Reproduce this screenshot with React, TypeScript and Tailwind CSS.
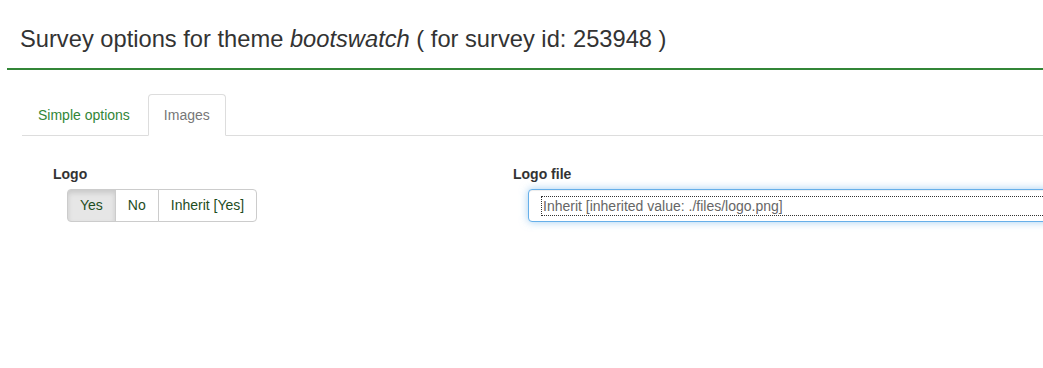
export default function App() {
  return (
    <div className="min-h-[368px] w-[1043px] overflow-hidden bg-white text-[14px] text-[#333] font-['Liberation_Sans',Arial,sans-serif]">
      <div className="pl-[7px]">
        <div className="border-b-2 border-[#328637] pl-[13px] pt-[26px] pb-[16px] w-[1100px]">
          <h1 className="text-[23.7px] leading-[26px] text-[#333]">
            Survey options for theme <em>bootswatch</em> ( for survey id: 253948 )
          </h1>
        </div>
      </div>

      <div className="pl-[22px] pt-[24px]">
        <ul className="flex border-b border-[#ddd] w-[1100px]">
          <li className="mr-[2px] -mb-px">
            <a className="block px-[15px] py-[10px] leading-[20px] text-[#328637] border border-transparent rounded-t-[4px]">
              Simple options
            </a>
          </li>
          <li className="-mb-px">
            <a className="block px-[15px] py-[10px] leading-[20px] text-[#777] bg-white border border-[#ddd] border-b-transparent rounded-t-[4px]">
              Images
            </a>
          </li>
        </ul>
      </div>

      <div className="flex pl-[38px] pt-[28px]">
        <div className="w-[460px] shrink-0 px-[15px]">
          <label className="block font-bold leading-[20px] mb-[5px]">Logo</label>
          <div className="ml-[14px] inline-flex h-[33px]">
            <button className="px-[12px] text-[#1e4d1e] bg-[#e6e6e6] border border-[#ccc] rounded-l-[4px] shadow-[inset_0_3px_5px_rgba(0,0,0,0.125)]">
              Yes
            </button>
            <button className="px-[12px] -ml-px text-[#1e4d1e] bg-white border border-[#ccc]">
              No
            </button>
            <button className="px-[12px] -ml-px text-[#1e4d1e] bg-white border border-[#ccc] rounded-r-[4px]">
              Inherit [Yes]
            </button>
          </div>
        </div>
        <div className="shrink-0 px-[15px]">
          <label className="block font-bold leading-[20px] mb-[5px]">Logo file</label>
          <div className="ml-[15px] h-[33px] w-[700px] rounded-[4px] border border-[#66afe9] bg-white shadow-[inset_0_1px_1px_rgba(0,0,0,0.075),0_0_8px_rgba(102,175,233,0.6)] flex items-center px-[12px]">
            <div className="flex-1 border border-dotted border-[#333] h-[20px] leading-[18px] pl-px text-[#666]">
              Inherit [inherited value: ./files/logo.png]
            </div>
          </div>
        </div>
      </div>
    </div>
  );
}
